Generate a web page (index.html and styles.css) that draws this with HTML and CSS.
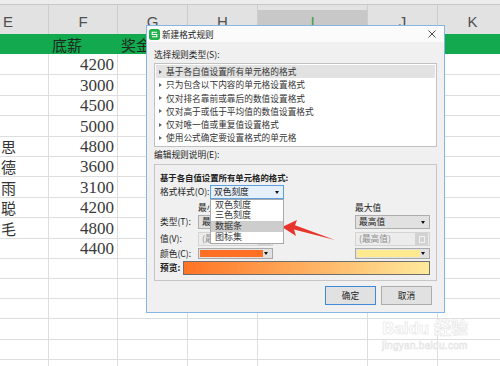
FILE: index.html
```html
<!DOCTYPE html>
<html lang="zh-CN">
<head>
	<meta charset="UTF-8">
	<title>新建格式规则</title>
	<link rel="stylesheet" href="styles.css">
</head>
<body>
	<div class="sheet">
		<div class="sheet-top"></div>
		<div class="col-heads">
			<span class="first">E</span>
			<span>F</span>
			<span>G</span>
			<span>H</span>
			<span class="active">I</span>
			<span>J</span>
			<span>K</span>
		</div>
		<div class="row head">
			<span></span><span class="txt">底薪</span><span class="txt">奖金</span><span></span><span></span><span></span><span></span>
		</div>
		<div class="row"><span></span><span class="num">4200</span><span></span><span></span><span></span><span></span><span></span></div>
		<div class="row"><span></span><span class="num">3000</span><span></span><span></span><span></span><span></span><span></span></div>
		<div class="row"><span></span><span class="num">4500</span><span></span><span></span><span></span><span></span><span></span></div>
		<div class="row"><span></span><span class="num">5000</span><span></span><span></span><span></span><span></span><span></span></div>
		<div class="row"><span class="name">思</span><span class="num">4800</span><span></span><span></span><span></span><span></span><span></span></div>
		<div class="row"><span class="name">德</span><span class="num">3600</span><span></span><span></span><span></span><span></span><span></span></div>
		<div class="row"><span class="name">雨</span><span class="num">3100</span><span></span><span></span><span></span><span></span><span></span></div>
		<div class="row"><span class="name">聪</span><span class="num">4200</span><span></span><span></span><span></span><span></span><span></span></div>
		<div class="row"><span class="name">毛</span><span class="num">4800</span><span></span><span></span><span></span><span></span><span></span></div>
		<div class="row"><span></span><span class="num">4400</span><span></span><span></span><span></span><span></span><span></span></div>
		<div class="row"><span></span><span></span><span></span><span></span><span></span><span></span><span></span></div>
		<div class="row"><span></span><span></span><span></span><span></span><span></span><span></span><span></span></div>
		<div class="row"><span></span><span></span><span></span><span></span><span></span><span></span><span></span></div>
		<div class="row"><span></span><span></span><span></span><span></span><span></span><span></span><span></span></div>
		<div class="row"><span></span><span></span><span></span><span></span><span></span><span></span><span></span></div>
		<div class="row"><span></span><span></span><span></span><span></span><span></span><span></span><span></span></div>
	</div>

	<div class="watermark">
		<div class="wm-logo">Bai<span class="paw">du</span> 经验</div>
		<div class="wm-url">jingyan.baidu.com</div>
	</div>

	<div class="dialog">
		<div class="titlebar">
			<svg class="app-icon" viewBox="0 0 11 11" width="11" height="11">
				<rect width="11" height="11" rx="2.5" fill="#23b14d"/>
				<path d="M8 3.3H3.2v2.2h4.6v2.2H3" fill="none" stroke="#fff" stroke-width="1.1"/>
			</svg>
			<span class="title">新建格式规则</span>
			<svg class="close" viewBox="0 0 8 8" width="8" height="8">
				<path d="M0.5 0.5L7.5 7.5M7.5 0.5L0.5 7.5" stroke="#333" stroke-width="0.9"/>
			</svg>
		</div>
		<div class="dlg-body">
			<div class="label">选择规则类型(S):</div>
			<ul class="rule-list">
				<li class="sel">基于各自值设置所有单元格的格式</li>
				<li>只为包含以下内容的单元格设置格式</li>
				<li>仅对排名靠前或靠后的数值设置格式</li>
				<li>仅对高于或低于平均值的数值设置格式</li>
				<li>仅对唯一值或重复值设置格式</li>
				<li>使用公式确定要设置格式的单元格</li>
			</ul>
			<div class="label">编辑规则说明(E):</div>
			<div class="group">
				<div class="g-title">基于各自值设置所有单元格的格式:</div>
				<div class="style-row">
					<span class="style-label">格式样式(O):</span>
					<div class="select focus">双色刻度
						<ul class="dropdown">
							<li>双色刻度</li>
							<li>三色刻度</li>
							<li class="sel">数据条</li>
							<li>图标集</li>
						</ul>
					</div>
				</div>
				<div class="g-row minmax">
					<span></span>
					<span>最小值</span>
					<span></span>
					<span>最大值</span>
				</div>
				<div class="g-row type-row">
					<span>类型(T):</span>
					<div class="select">最低值</div>
					<span></span>
					<div class="select">最高值</div>
				</div>
				<div class="g-row value-row">
					<span>值(V):</span>
					<div class="input">(最低值)<i class="pick"></i></div>
					<span></span>
					<div class="input">(最高值)<i class="pick"></i></div>
				</div>
				<div class="g-row color-row">
					<span>颜色(C):</span>
					<div class="color-select"><i class="swatch orange"></i></div>
					<span></span>
					<div class="color-select"><i class="swatch yellow"></i></div>
				</div>
				<div class="preview-row">
					<span class="preview-label">预览:</span>
					<div class="preview-bar"></div>
				</div>
			</div>
			<div class="buttons">
				<div class="btn primary">确定</div>
				<div class="btn">取消</div>
			</div>
		</div>
	</div>

	<svg class="arrow" viewBox="0 0 500 366" width="500" height="366">
		<polygon points="282,227 297,220 295,225.3 335,240 294,229.5 296,236" fill="#e8352c"/>
	</svg>
</body>
</html>
```

FILE: styles.css
```css
html, body {
	margin: 0;
	padding: 0;
}
body {
	width: 500px;
	height: 366px;
	overflow: hidden;
	position: relative;
	background: #fff;
	font-family: "Liberation Sans", "Noto Sans CJK SC", sans-serif;
}

/* spreadsheet behind the dialog */
.sheet-top {
	height: 4px;
	background: #ececec;
	border-bottom: 1px solid #c8c8c8;
}
.col-heads,
.row {
	display: grid;
	grid-template-columns: 49px 69px 70px 70px 110px 70px 70px;
	width: 508px;
}
.col-heads {
	height: 29px;
	background: #e2e2e2;
}
.col-heads span {
	box-sizing: border-box;
	border-right: 1px solid #cdcdcd;
	padding-top: 5px;
	line-height: 24px;
	text-align: center;
	font-size: 15px;
	color: #505050;
}
.col-heads .first {
	text-align: left;
	padding-left: 3px;
}
.col-heads .active {
	background: linear-gradient(#e2e2e2 0 5px, #c8c8c8 5px);
	color: #3d9a3d;
}
.row {
	height: 20.4px;
}
.row span {
	box-sizing: border-box;
	border-right: 1px solid #dedede;
	border-bottom: 1px solid #dedede;
	padding-top: 2px;
	line-height: 18px;
	white-space: nowrap;
}
.row.head {
	background: #12a94f;
}
.row.head span {
	border: none;
}
.txt {
	padding-left: 3px;
	font-family: "Noto Sans CJK SC", sans-serif;
	font-size: 15px;
	color: #1c2a20;
}
.num {
	text-align: right;
	padding-right: 3px;
	font-family: "Liberation Serif", serif;
	font-size: 17px;
	color: #3a3a3a;
}
.name {
	padding-left: 1px;
	font-family: "Noto Sans CJK SC", sans-serif;
	font-size: 15px;
	color: #333;
}

/* faint site watermark */
.watermark {
	position: absolute;
	left: 382px;
	top: 318px;
	color: #fff;
	-webkit-text-stroke: 0.6px #e4e4e4;
	font-family: "Liberation Sans", "Noto Sans CJK SC", sans-serif;
}
.wm-logo {
	font-size: 17px;
	font-weight: bold;
	line-height: 22px;
}
.wm-url {
	font-size: 10px;
	line-height: 12px;
	letter-spacing: 0.3px;
}

/* dialog window */
.dialog {
	position: absolute;
	left: 146px;
	top: 25px;
	width: 299px;
	box-sizing: border-box;
	border: 1px solid #86b5e3;
	background: #f0f0f0;
	font-family: "Noto Sans CJK SC", sans-serif;
	font-size: 8.7px;
	color: #222;
}
.titlebar {
	height: 16px;
	background: #fbfbfb;
	display: flex;
	align-items: center;
	padding-left: 2px;
}
.app-icon {
	margin-right: 2px;
}
.title {
	flex: 1;
	font-size: 8.6px;
	color: #1a1a1a;
}
.close {
	margin-right: 8px;
}
.dlg-body {
	padding: 7px 7px 7px 7px;
}
.label {
	line-height: 12px;
}
.rule-list {
	list-style: none;
	margin: 2px 0 2px 0;
	padding: 1px;
	background: #fff;
	border: 1px solid #c1c1c1;
}
.rule-list li {
	position: relative;
	height: 13.3px;
	line-height: 13.3px;
	padding-left: 10px;
	color: #333;
}
.rule-list li:before {
	content: "";
	position: absolute;
	left: 3px;
	top: 4.5px;
	border-left: 3px solid #666;
	border-top: 2.2px solid transparent;
	border-bottom: 2.2px solid transparent;
}
.rule-list li.sel {
	background: #e2e2e2;
}
.group {
	margin-top: 3px;
	border: 1px solid #c6c6c6;
	padding: 6px 6px 5px 5px;
}
.g-title {
	font-weight: bold;
	line-height: 12px;
	font-size: 8.4px;
}
.style-row {
	display: flex;
	margin-top: 2px;
	height: 14px;
	line-height: 14px;
}
.style-label {
	width: 50px;
}
.g-row {
	display: grid;
	grid-template-columns: 38px 75px 1fr 75px;
	align-items: center;
}
.minmax {
	margin-top: 3px;
	height: 12px;
	line-height: 12px;
}
.type-row {
	margin-top: 1px;
	height: 14px;
}
.value-row {
	margin-top: 3px;
	height: 14px;
}
.color-row {
	margin-top: 1px;
	height: 11px;
}
.select {
	position: relative;
	box-sizing: border-box;
	height: 14px;
	line-height: 12px;
	padding-left: 3px;
	border: 1px solid #adadad;
	background: #e1e1e1;
}
.select:after,
.color-select:after {
	content: "";
	position: absolute;
	right: 4px;
	top: 5px;
	border-top: 3px solid #111;
	border-left: 2.5px solid transparent;
	border-right: 2.5px solid transparent;
}
.style-row .select {
	width: 74px;
}
.select.focus {
	border-color: #5a9fe0;
	background: #e6f0fa;
}
.dropdown {
	list-style: none;
	position: absolute;
	left: -1px;
	top: 13px;
	width: 74px;
	margin: 0;
	padding: 0;
	box-sizing: border-box;
	border: 1px solid #a8a8a8;
	background: #fff;
	z-index: 2;
}
.dropdown li {
	height: 10.7px;
	line-height: 10.7px;
	padding-left: 4px;
	font-size: 9px;
	color: #333;
}
.dropdown li.sel {
	background: #cdcdcd;
}
.input {
	position: relative;
	box-sizing: border-box;
	height: 14px;
	line-height: 12px;
	padding-left: 3px;
	border: 1px solid #d4d4d4;
	background: #ececec;
	color: #8c8c8c;
}
.pick {
	position: absolute;
	right: 1px;
	top: 0;
	width: 13px;
	height: 12px;
	background: #d2d2d2;
}
.pick:after {
	content: "";
	position: absolute;
	left: 4px;
	top: 3px;
	width: 4px;
	height: 5px;
	border: 1px solid #f2f2f2;
}
.color-select {
	position: relative;
	box-sizing: border-box;
	height: 11px;
	border: 1px solid #a9a9a9;
	background: #e1e1e1;
	padding: 1px 9px 1px 1px;
}
.color-select:after {
	top: 3px;
}
.swatch {
	display: block;
	height: 7px;
}
.swatch.orange {
	background: #ff6f24;
}
.swatch.yellow {
	background: #ffea90;
}
.preview-row {
	display: flex;
	align-items: center;
	margin-top: 3px;
	height: 14px;
}
.preview-label {
	width: 23px;
	font-weight: bold;
}
.preview-bar {
	flex: 1;
	height: 14px;
	box-sizing: border-box;
	border: 1px solid #6f6f6f;
	background: linear-gradient(to right, #ff7424, #ffea9c);
}
.buttons {
	display: flex;
	justify-content: flex-end;
	gap: 5px;
	margin-top: 5px;
	padding-right: 5px;
}
.btn {
	width: 51px;
	height: 19px;
	box-sizing: border-box;
	border: 1px solid #adadad;
	background: #e1e1e1;
	text-align: center;
	line-height: 17px;
	color: #222;
}
.btn.primary {
	border: 1px solid #3f8ad6;
}

.arrow {
	position: absolute;
	left: 0;
	top: 0;
	pointer-events: none;
}
```
